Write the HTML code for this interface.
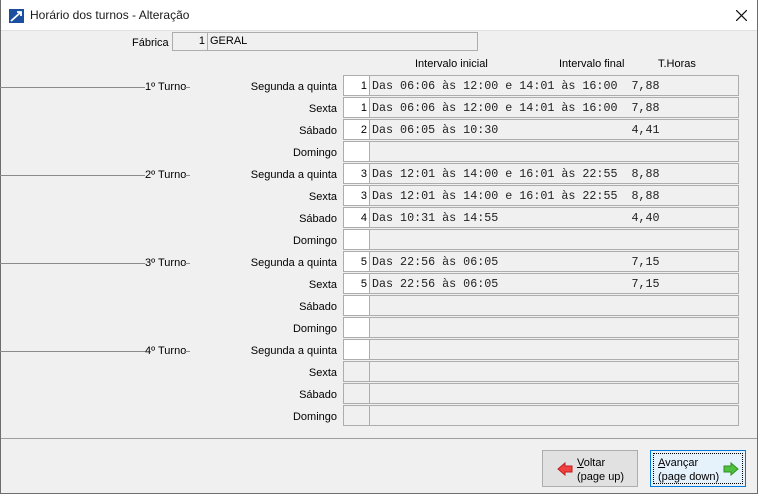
<!DOCTYPE html>
<html><head><meta charset="utf-8"><style>
*{margin:0;padding:0;box-sizing:border-box}
body{width:758px;height:494px;background:#f0f0f0;font-family:"Liberation Sans",sans-serif;font-size:11px;color:#000;position:relative;overflow:hidden}
.a{position:absolute}
.win{left:0;top:0;width:758px;height:494px;border:1px solid #6d6d6d;border-top:none}
.title{left:0;top:0;width:758px;height:31px;background:#fff;border-bottom:1px solid #e0e0e0}
.lbl{position:absolute;right:421px;text-align:right;white-space:nowrap}
.box{position:absolute;left:343px;width:27px;height:21px;border:1px solid #adadad;background:#fff;text-align:right;padding-right:2px;line-height:20px}
.box.g{background:#f0f0f0}
.fld{position:absolute;left:369px;width:370px;height:21px;border:1px solid #adadad;background:#f0f0f0;font-family:"Liberation Mono",monospace;font-size:11.7px;line-height:20px;padding-left:2px;white-space:pre;color:#222}
.ln{position:absolute;left:0;width:145px;height:1px;background:#8a8a8a}
.tk{position:absolute;left:184px;width:6px;height:1px;background:#8a8a8a}
.tl{position:absolute;left:145px}
.btn{position:absolute;top:450px;height:37px;font-size:11px;line-height:14px}
</style></head><body>
<div class="a title"></div>
<svg class="a" style="left:9px;top:9px" width="15" height="14" viewBox="0 0 15 14"><rect width="15" height="14" fill="#1c4fa0"/><path d="M2 12 L12 3 M8 3 H12 V7" stroke="#fff" stroke-width="1.8" fill="none"/></svg>
<div class="a" style="left:30px;top:8px;font-size:12px;color:#1a1a1a">Horário dos turnos - Alteração</div>
<svg class="a" style="left:736px;top:10px" width="11" height="11"><path d="M0 0L11 11M11 0L0 11" stroke="#111" stroke-width="1.2"/></svg>
<div class="a win"></div>
<div class="a" style="left:132px;top:37px">Fábrica</div>
<div class="a" style="left:172px;top:32px;width:36px;height:19px;border:1px solid #adadad;text-align:right;padding-right:2px;line-height:17px">1</div>
<div class="a" style="left:207px;top:32px;width:271px;height:19px;border:1px solid #adadad;padding-left:2px;line-height:17px">GERAL</div>
<div class="a" style="left:415px;top:58px">Intervalo inicial</div>
<div class="a" style="left:559px;top:58px">Intervalo final</div>
<div class="a" style="left:658px;top:58px">T.Horas</div>

<div class="ln" style="top:87px"></div><div class="tl" style="top:81px">1º Turno</div><div class="tk" style="top:87px"></div>
<div class="ln" style="top:175px"></div><div class="tl" style="top:169px">2º Turno</div><div class="tk" style="top:175px"></div>
<div class="ln" style="top:263px"></div><div class="tl" style="top:257px">3º Turno</div><div class="tk" style="top:263px"></div>
<div class="ln" style="top:351px"></div><div class="tl" style="top:345px">4º Turno</div><div class="tk" style="top:351px"></div>

<div class="lbl" style="top:81px">Segunda a quinta</div><div class="box" style="top:75px">1</div><div class="fld" style="top:75px">Das 06:06 às 12:00 e 14:01 às 16:00  7,88</div>
<div class="lbl" style="top:103px">Sexta</div><div class="box" style="top:97px">1</div><div class="fld" style="top:97px">Das 06:06 às 12:00 e 14:01 às 16:00  7,88</div>
<div class="lbl" style="top:125px">Sábado</div><div class="box" style="top:119px">2</div><div class="fld" style="top:119px">Das 06:05 às 10:30                   4,41</div>
<div class="lbl" style="top:147px">Domingo</div><div class="box" style="top:141px"></div><div class="fld" style="top:141px"></div>
<div class="lbl" style="top:169px">Segunda a quinta</div><div class="box" style="top:163px">3</div><div class="fld" style="top:163px">Das 12:01 às 14:00 e 16:01 às 22:55  8,88</div>
<div class="lbl" style="top:191px">Sexta</div><div class="box" style="top:185px">3</div><div class="fld" style="top:185px">Das 12:01 às 14:00 e 16:01 às 22:55  8,88</div>
<div class="lbl" style="top:213px">Sábado</div><div class="box" style="top:207px">4</div><div class="fld" style="top:207px">Das 10:31 às 14:55                   4,40</div>
<div class="lbl" style="top:235px">Domingo</div><div class="box" style="top:229px"></div><div class="fld" style="top:229px"></div>
<div class="lbl" style="top:257px">Segunda a quinta</div><div class="box" style="top:251px">5</div><div class="fld" style="top:251px">Das 22:56 às 06:05                   7,15</div>
<div class="lbl" style="top:279px">Sexta</div><div class="box" style="top:273px">5</div><div class="fld" style="top:273px">Das 22:56 às 06:05                   7,15</div>
<div class="lbl" style="top:301px">Sábado</div><div class="box" style="top:295px"></div><div class="fld" style="top:295px"></div>
<div class="lbl" style="top:323px">Domingo</div><div class="box" style="top:317px"></div><div class="fld" style="top:317px"></div>
<div class="lbl" style="top:345px">Segunda a quinta</div><div class="box" style="top:339px"></div><div class="fld" style="top:339px"></div>
<div class="lbl" style="top:367px">Sexta</div><div class="box g" style="top:361px"></div><div class="fld" style="top:361px"></div>
<div class="lbl" style="top:389px">Sábado</div><div class="box g" style="top:383px"></div><div class="fld" style="top:383px"></div>
<div class="lbl" style="top:411px">Domingo</div><div class="box g" style="top:405px"></div><div class="fld" style="top:405px"></div>

<div class="a" style="left:1px;top:438px;width:756px;height:1px;background:#a0a0a0"></div>

<div class="btn" style="left:542px;width:96px;border:1px solid #adadad;background:#e1e1e1">
<svg class="a" style="left:14px;top:11px" width="16" height="14"><path d="M1 7L8 1V4H15V10H8V13Z" fill="#f04040" stroke="#c02020"/></svg>
<div class="a" style="left:34px;top:5px"><u>V</u>oltar<br>(page up)</div></div>
<div class="btn" style="left:650px;width:96px;border:1px solid #0078d7;background:#e5f1fb">
<div class="a" style="left:2px;top:2px;right:2px;bottom:2px;border:1px dotted #000"></div>
<svg class="a" style="left:72px;top:11px" width="16" height="14"><path d="M15 7L8 1V4H1V10H8V13Z" fill="#50c040" stroke="#309020"/></svg>
<div class="a" style="left:7px;top:5px"><u>A</u>vançar<br>(page down)</div></div>
</body></html>
